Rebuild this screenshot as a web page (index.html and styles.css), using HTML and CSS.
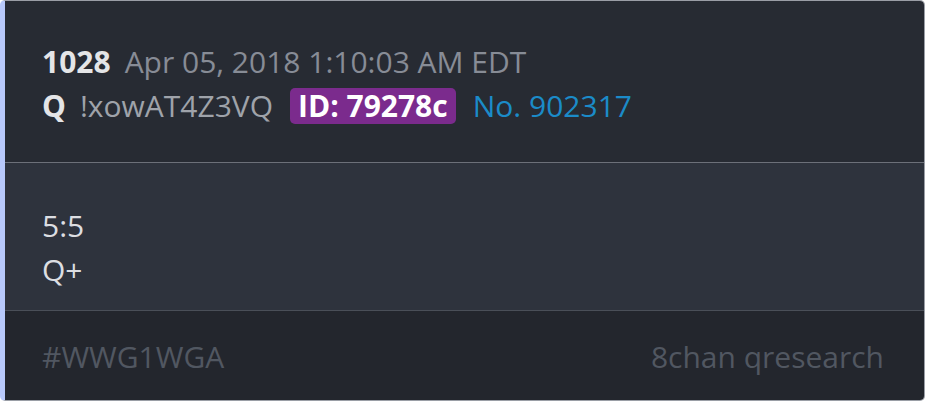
FILE: index.html
```html
<!DOCTYPE html>
<html lang="en">
<head>
    <meta charset="UTF-8">
    <meta name="viewport" content="width=device-width, initial-scale=1.0">
    <title>Post 1028</title>
    <link rel="stylesheet" href="styles.css">
</head>
<body>
    <div class="post">
        <div class="post-header">
            <div class="meta-line">
                <span class="post-num">1028</span>
                <span class="post-date">Apr 05, 2018 1:10:03 AM EDT</span>
            </div>
            <div class="meta-line">
                <span class="author">Q</span>
                <span class="trip">!xowAT4Z3VQ</span>
                <span class="user-id">ID: 79278c</span>
                <a class="post-link" href="#">No. 902317</a>
            </div>
        </div>
        <div class="post-body">
            <p>5:5</p>
            <p>Q+</p>
        </div>
        <div class="post-footer">
            <span class="tag">#WWG1WGA</span>
            <span class="source">8chan qresearch</span>
        </div>
    </div>
</body>
</html>
```

FILE: styles.css
```css
* {
    margin: 0;
    padding: 0;
    box-sizing: border-box;
}

body {
    font-family: "Open Sans", sans-serif;
    background: #ffffff;
    width: 926px;
    height: 402px;
    overflow: hidden;
}

.post {
    display: flex;
    flex-direction: column;
    width: 925px;
    height: 401px;
    border: 1px solid #9a9ea6;
    border-left: 5px solid #b8c9fb;
    border-radius: 5px;
    overflow: hidden;
    font-size: 30px;
    line-height: 44px;
}

.post-header {
    background: #272b33;
    padding: 39px 40px 34px 37px;
    border-bottom: 1px solid #6c7079;
}

.meta-line {
    display: flex;
    align-items: center;
    gap: 0 14px;
}

.post-num,
.author {
    font-weight: 700;
    color: #e4e5e7;
}

.post-date {
    color: #878c96;
}

.trip {
    color: #9fa3aa;
    margin-right: 3px;
}

.user-id {
    background: #7b2b8d;
    color: #ffffff;
    font-weight: 700;
    line-height: 36px;
    padding: 0 8px;
    border-radius: 5px;
    margin-right: 3px;
}

.post-link {
    color: #1b8bc9;
    text-decoration: none;
}

.post-body {
    flex: 1;
    background: #2e333d;
    padding: 41px 37px 0;
    color: #dcdee2;
    border-bottom: 1px solid #4a4f58;
}

.post-footer {
    display: flex;
    justify-content: space-between;
    background: #23262d;
    padding: 24px 40px 0 37px;
    height: 89px;
    color: #515761;
}
```
